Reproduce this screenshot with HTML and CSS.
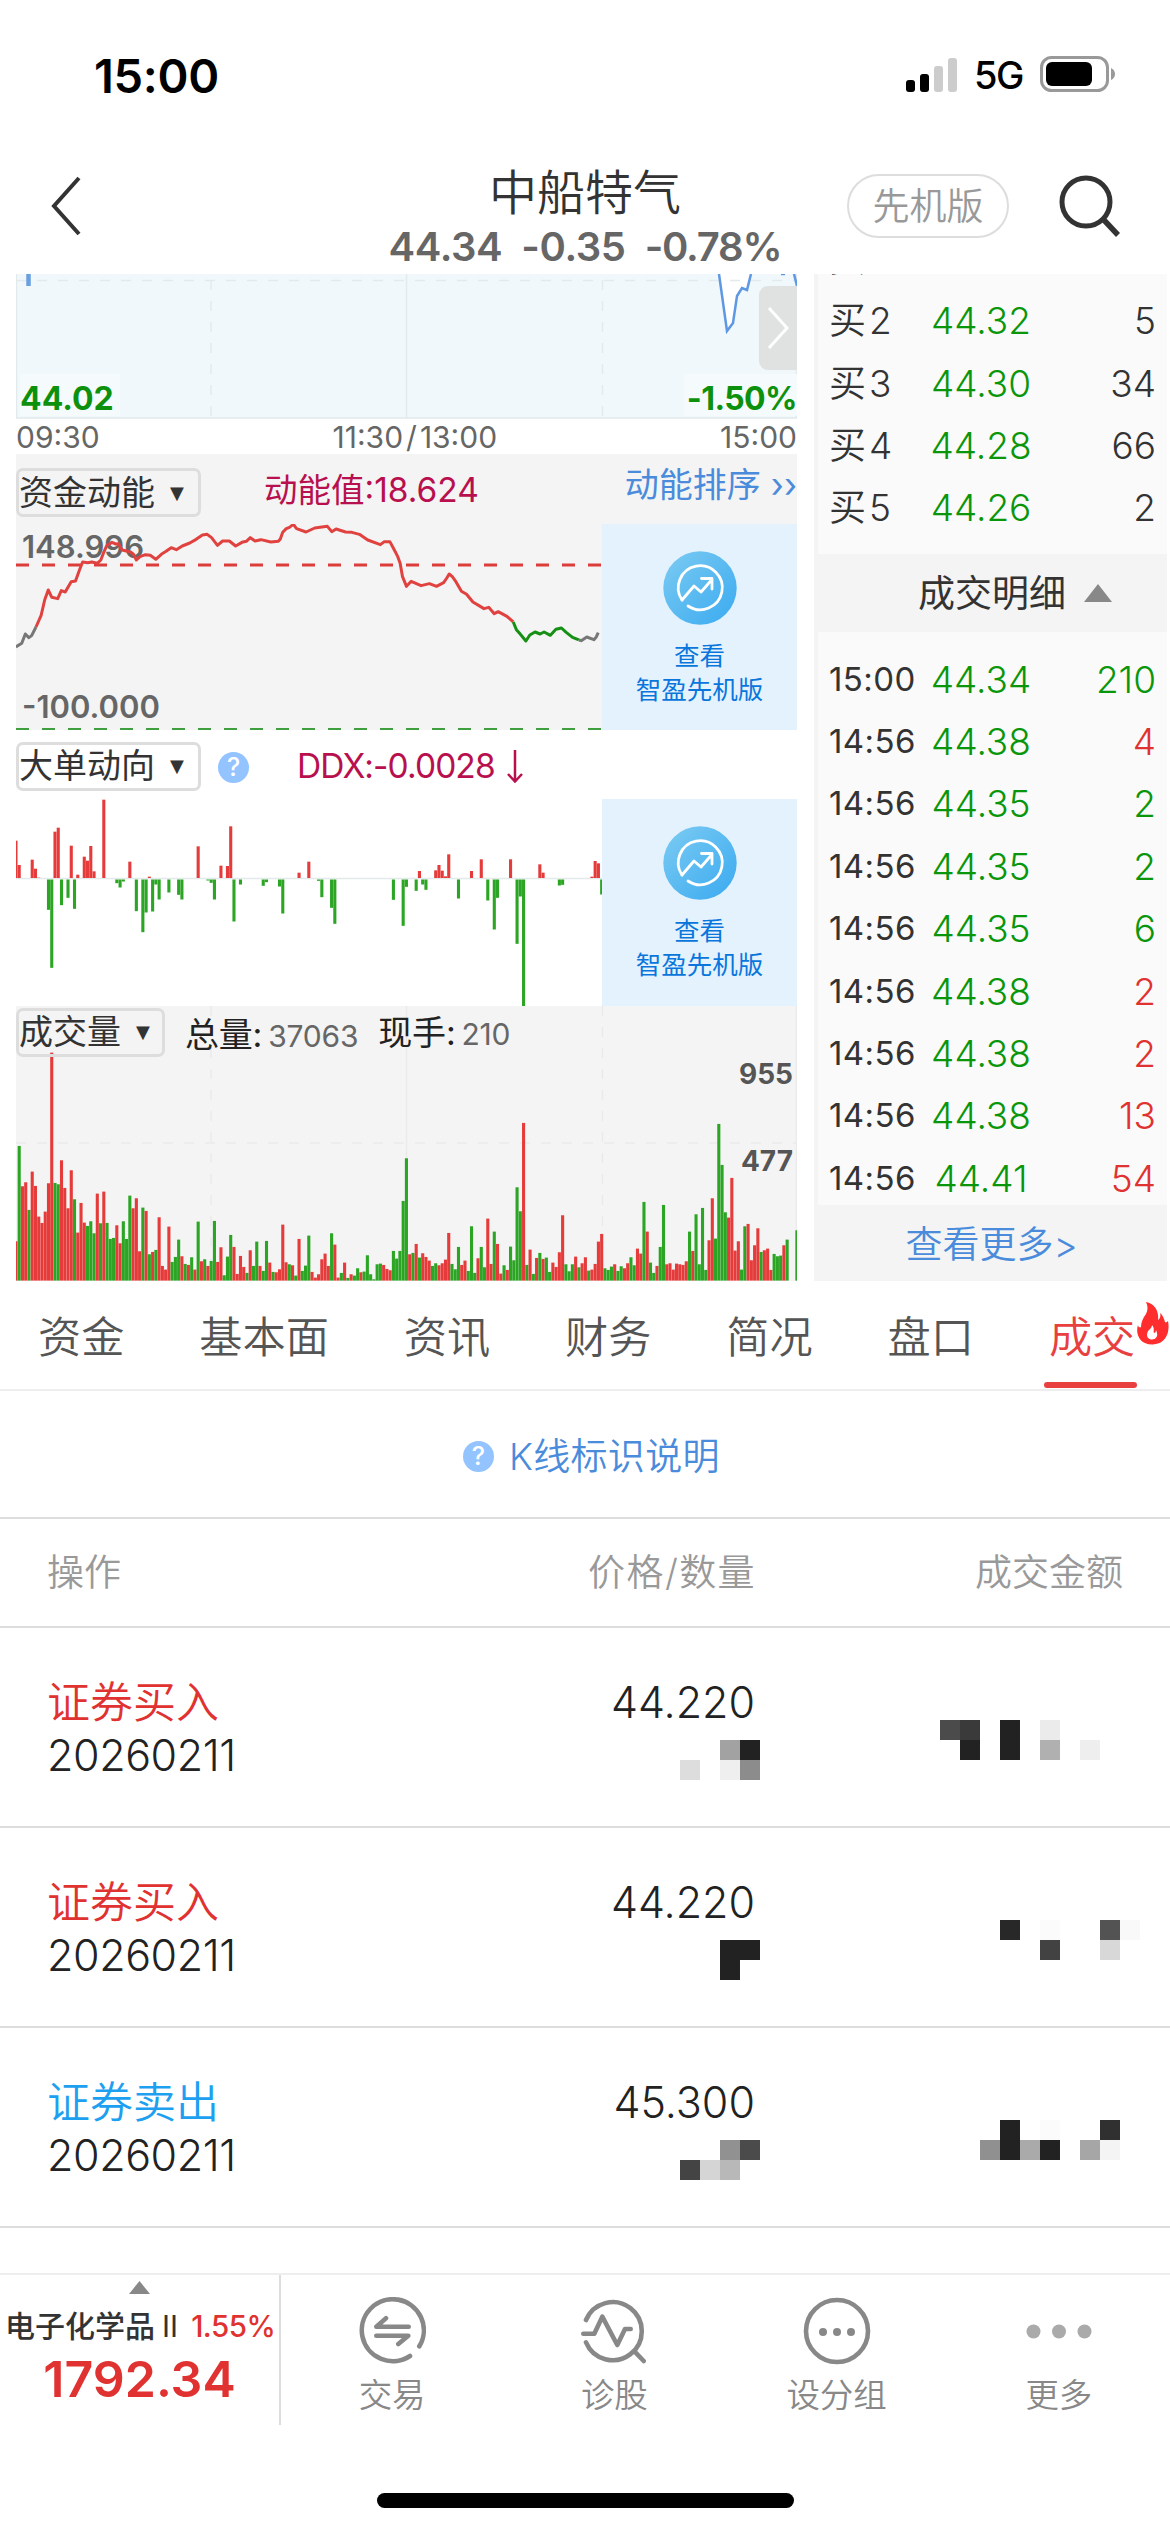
FILE: index.html
```html
<!DOCTYPE html>
<html lang="zh-CN">
<head>
<meta charset="utf-8">
<title>中船特气</title>
<link rel="stylesheet" href="styles.css">
</head>
<body>
<svg class="defs" width="0" height="0">
  <defs>
    <linearGradient id="blue" x1="0" y1="0" x2="1" y2="1"><stop offset="0" stop-color="#7ccbf2"/><stop offset="1" stop-color="#3aaaf0"/></linearGradient>
    <symbol id="trend" viewBox="0 0 74 74">
      <circle cx="37" cy="37" r="36.7" fill="url(#blue)"/>
      <path d="M19 49 A22 22 0 1 1 25 55" fill="none" stroke="#fff" stroke-width="2.8" stroke-linecap="round"/>
      <path d="M19 49 L31 35 L38 41 L48.500 29 M38.500 27.500 H49 V38" fill="none" stroke="#fff" stroke-width="2.800" stroke-linecap="round" stroke-linejoin="round"/>
    </symbol>
  </defs>
</svg>

<header class="status">
  <span class="clock">15:00</span>
  <div class="status-right">
    <svg class="signal" viewBox="0 0 52 34"><rect x="0" y="22" width="9" height="12" rx="3"/><rect x="14" y="16" width="9" height="18" rx="3"/><rect x="28" y="8" width="9" height="26" rx="3" fill="#ccc"/><rect x="42" y="0" width="9" height="34" rx="3" fill="#ccc"/></svg>
    <span class="net">5G</span>
    <svg class="battery" viewBox="0 0 76 38"><rect x="1.500" y="1.500" width="66" height="33" rx="10" fill="none" stroke="#999" stroke-width="3"/><rect x="6" y="6" width="46" height="24" rx="6"/><path d="M71 12 Q75 14 75 18 Q75 22 71 24Z" fill="#999"/></svg>
  </div>
</header>

<nav class="titlebar">
  <svg class="back" viewBox="0 0 34 64"><path d="M30 4 L5 32 L30 60" fill="none" stroke="#333" stroke-width="4"/></svg>
  <div class="heading">
    <h1>中船特气</h1>
    <p class="quote"><span>44.34</span><span>-0.35</span><span class="change">-0.78%</span></p>
  </div>
  <span class="pill">先机版</span>
  <svg class="search" viewBox="0 0 64 64"><circle cx="28" cy="28" r="24" fill="none" stroke="#333" stroke-width="5"/><path d="M45 45 L60 61" stroke="#333" stroke-width="5.500"/></svg>
</nav>

<main class="market">
  <section class="charts">
    <div class="price-chart">
      <svg viewBox="0 0 781 145">
        <rect width="781" height="145" fill="#f0f8fc"/>
        <path d="M703 0 L711 58 L717 49 L721 22 L726 14 L731 16 L735 0Z" fill="#fff"/>
        <path d="M0 6.500 H781" class="grid dashed"/><path d="M195 6 V144" class="grid dashed"/><path d="M586.500 6 V144" class="grid dashed"/>
        <path d="M390.500 0 V144 M0 144 H781 M.5 0 V144 M780.500 0 V144" class="grid"/>
        <path d="M12.500 0 V12" stroke="#6a9fe0" stroke-width="4.500"/>
        <path d="M703 0 L711 57 L717 49 L721 22 L726 14 L731 16 L735 0 M778 0 L781 12 M765 0 H769" fill="none" stroke="#5f98e2" stroke-width="2.500"/>
      </svg>
      <b class="label low">44.02</b>
      <b class="label low-pct">-1.50%</b>
      <span class="expand"><svg viewBox="0 0 38 84"><path d="M10 22 L28 42 L10 62" fill="none" stroke="#fff" stroke-width="3"/></svg></span>
    </div>
    <div class="axis"><span>09:30</span><span class="noon">11:30<i>/</i>13:00</span><span>15:00</span></div>

    <div class="panel-head momentum-head">
      <span class="select">资金动能<i>▼</i></span>
      <span class="reading">动能值:18.624</span>
      <a class="rank">动能排序<i>››</i></a>
    </div>
    <div class="panel-body momentum">
      <div class="plot">
        <b class="label max">148.996</b><b class="label min">-100.000</b>
        <svg viewBox="0 0 586 206">
          <path d="M0 41 H586" stroke="#dc3c3a" stroke-width="3" stroke-dasharray="13 13"/>
          <path d="M0 205 H586" stroke="#3f9f3f" stroke-width="2" stroke-dasharray="13 13"/>
          <g transform="translate(-16 -24) scale(.3954 .3333)" class="trace">
            <path stroke="#777" d="M40 441 L55 430 L64 402 L73 413 L80 407 L91 381"/>
            <path stroke="#e04240" d="M91 381 L104 346 L113 300 L122 270 L131 292 L146 296 L155 272 L165 276 L180 245 L191 243 L201 210 L209 186 L222 188 L232 186 L246 190 L255 180 L262 158 L270 137 L276 133 L283 127 L293 132 L300 131 L309 150 L330 156 L337 162 L345 180 L354 170 L368 164 L380 166 L394 178 L408 163 L420 154 L433 143 L446 149 L461 138 L480 129 L496 118 L512 105 L524 103 L535 113 L550 136 L563 123 L580 123 L596 138 L612 127 L623 124 L633 113 L645 123 L660 119 L685 126 L704 124 L709 117 L715 97 L724 86 L732 82 L742 73 L750 86 L774 96 L796 84 L828 79 L839 95 L850 87 L874 96 L890 97 L909 103 L930 120 L962 134 L972 125 L986 125 L995 145 L1006 170 L1012 190 L1018 230 L1028 259 L1040 244 L1065 257 L1086 251 L1104 259 L1122 248 L1130 234 L1136 222 L1144 230 L1153 245 L1167 274 L1180 283 L1196 306 L1224 326 L1236 322 L1250 341 L1260 335 L1282 349 L1298 366"/>
            <path stroke="#159015" d="M1298 366 L1306 389 L1314 400 L1330 423 L1340 405 L1353 396 L1366 402 L1376 396 L1392 406 L1406 388 L1420 384 L1432 397 L1448 412 L1464 420"/>
            <path stroke="#777" d="M1464 420 L1470 422 L1484 411 L1502 419 L1508 411 L1513 398"/>
          </g>
        </svg>
      </div>
      <a class="promo"><svg><use href="#trend"/></svg><span>查看</span><span>智盈先机版</span></a>
    </div>

    <div class="panel-head ddx-head">
      <span class="select">大单动向<i>▼</i></span>
      <span class="help">?</span>
      <span class="reading ddx-reading">DDX:-0.0028</span>
      <svg class="down" viewBox="0 0 16 34"><path d="M8 1 V32 M1 25 L8 32.500 L15 25" fill="none" stroke="#b8104e" stroke-width="2.500"/></svg>
    </div>
    <div class="panel-body ddx">
      <div class="plot"><svg viewBox="0 0 586 207"><path d="M0 79.500 H586" class="grid"/><g id="ddx"></g></svg></div>
      <a class="promo"><svg><use href="#trend"/></svg><span>查看</span><span>智盈先机版</span></a>
    </div>

    <div class="volume">
      <svg viewBox="0 0 781 275">
        <path d="M195 0 V275 M586.500 0 V275" class="grid soft dashed"/><path d="M0 137 H781" class="grid soft dashed"/><path d="M390.500 0 V275 M780.500 0 V275" class="grid soft"/>
        <g id="vol"></g>
      </svg>
      <div class="volume-head">
        <span class="select short">成交量<i>▼</i></span>
        <span class="stat total">总量:<em>37063</em></span>
        <span class="stat">现手:<em>210</em></span>
      </div>
      <b class="label vmax">955</b><b class="label vmid">477</b>
    </div>
  </section>

  <aside class="book">
    <div class="bids">
      <div class="bid"><span>买<i>1</i></span><span class="price">44.33</span><span class="qty">1</span></div>
      <div class="bid"><span>买<i>2</i></span><span class="price">44.32</span><span class="qty">5</span></div>
      <div class="bid"><span>买<i>3</i></span><span class="price">44.30</span><span class="qty">34</span></div>
      <div class="bid"><span>买<i>4</i></span><span class="price">44.28</span><span class="qty">66</span></div>
      <div class="bid"><span>买<i>5</i></span><span class="price">44.26</span><span class="qty">2</span></div>
    </div>
    <div class="ticks-head">成交明细<svg viewBox="0 0 28 18"><path d="M14 0 L28 18 H0Z" fill="#888"/></svg></div>
    <div class="ticks">
      <div class="tick"><span>15:00</span><span class="price">44.34</span><span class="qty sell">210</span></div>
      <div class="tick"><span>14:56</span><span class="price">44.38</span><span class="qty buy">4</span></div>
      <div class="tick"><span>14:56</span><span class="price">44.35</span><span class="qty sell">2</span></div>
      <div class="tick"><span>14:56</span><span class="price">44.35</span><span class="qty sell">2</span></div>
      <div class="tick"><span>14:56</span><span class="price">44.35</span><span class="qty sell">6</span></div>
      <div class="tick"><span>14:56</span><span class="price">44.38</span><span class="qty buy">2</span></div>
      <div class="tick"><span>14:56</span><span class="price">44.38</span><span class="qty buy">2</span></div>
      <div class="tick"><span>14:56</span><span class="price">44.38</span><span class="qty buy">13</span></div>
      <div class="tick"><span>14:56</span><span class="price">44.41</span><span class="qty buy">54</span></div>
    </div>
    <a class="more">查看更多&gt;</a>
  </aside>
</main>

<nav class="tabs">
  <a>资金</a><a>基本面</a><a>资讯</a><a>财务</a><a>简况</a><a>盘口</a>
  <a class="active">成交<svg class="fire" viewBox="0 0 32 43"><path fill="#ff2d2d" fill-rule="evenodd" d="M9 0 C18 2 22 9 21 18 C23 17 24 14 23 11 C26 13 27 17 28 20 C29 21 30 20 31 19 C33 29 30 42 16 42.500 C3 43 -2 32 1 23 C1 25 3 26 4 25 C4 20 6 16 9 12 C11 8 11 4 9 0Z M15 23 C18 26 16 30 17 31 C18 31 19 30 19 28 C21 32 21 37 15 37.500 C9 37 9 31 12 28 C14 26 15 25 15 23Z"/></svg></a>
</nav>

<div class="explain"><span class="help">?</span>K线标识说明</div>

<section class="trades">
  <div class="thead"><span>操作</span><span>价格/数量</span><span>成交金额</span></div>
  <div class="trade">
    <div class="op"><span class="buy">证券买入</span><span class="date">20260211</span></div>
    <div class="deal"><span>44.220</span>
      <svg viewBox="0 0 4 2"><path fill="#a2a2a2" d="M2 0h1v1h-1z"/><path fill="#222" d="M3 0h1v1h-1z"/><path fill="#ddd" d="M0 1h1v1h-1z"/><path fill="#efefef" d="M2 1h1v1h-1z"/><path fill="#8c8c8c" d="M3 1h1v1h-1z"/></svg></div>
    <svg class="amount" viewBox="0 0 10 2"><path fill="#4b4b4b" d="M0 0h1v1h-1z"/><path fill="#3a3a3a" d="M1 0h1v1h-1z"/><path fill="#222" d="M1 1h1v1h-1zM3 0h1v2h-1z"/><path fill="#ebebeb" d="M5 0h1v1h-1z"/><path fill="#b0b0b0" d="M5 1h1v1h-1z"/><path fill="#eee" d="M7 1h1v1h-1z"/></svg>
  </div>
  <div class="trade">
    <div class="op"><span class="buy">证券买入</span><span class="date">20260211</span></div>
    <div class="deal"><span>44.220</span>
      <svg viewBox="0 0 4 2"><path fill="#222" d="M2 0h2v1h-1v1h-1z"/></svg></div>
    <svg class="amount" viewBox="0 0 10 2"><path fill="#282828" d="M3 0h1v1h-1z"/><path fill="#fbfbfb" d="M5 0h1v1h-1z"/><path fill="#424242" d="M5 1h1v1h-1z"/><path fill="#535353" d="M8 0h1v1h-1z"/><path fill="#f9f9f9" d="M9 0h1v1h-1z"/><path fill="#d8d8d8" d="M8 1h1v1h-1z"/></svg>
  </div>
  <div class="trade">
    <div class="op"><span class="sold">证券卖出</span><span class="date">20260211</span></div>
    <div class="deal"><span>45.300</span>
      <svg viewBox="0 0 4 2"><path fill="#919191" d="M2 0h1v1h-1z"/><path fill="#4b4b4b" d="M3 0h1v1h-1z"/><path fill="#444" d="M0 1h1v1h-1z"/><path fill="#d5d5d5" d="M1 1h1v1h-1z"/><path fill="#b8b8b8" d="M2 1h1v1h-1z"/></svg></div>
    <svg class="amount" viewBox="0 0 10 2"><path fill="#222" d="M3 0h1v2h-1zM5 1h1v1h-1z"/><path fill="#fbfbfb" d="M5 0h1v1h-1z"/><path fill="#303030" d="M8 0h1v1h-1z"/><path fill="#909090" d="M2 1h1v1h-1z"/><path fill="#aaa" d="M4 1h1v1h-1z"/><path fill="#a6a6a6" d="M7 1h1v1h-1z"/><path fill="#f4f4f4" d="M8 1h1v1h-1z"/></svg>
  </div>
</section>

<footer class="bottom">
  <div class="sector">
    <svg viewBox="0 0 21 13"><path d="M10.500 0 L21 13 H0Z" fill="#888"/></svg>
    <p class="sector-name"><span>电子化学品</span><span class="two">II</span><span class="pct">1.55%</span></p>
    <p class="index">1792.34</p>
  </div>
  <a class="action"><svg viewBox="0 0 68 68"><path d="M61.300 49.300 A31 31 0 1 0 52 59 M50.700 29.700 H18.300 L28 21.300 M18.300 38.700 H50.300 L40.300 47"/></svg>交易</a>
  <a class="action"><svg viewBox="0 0 68 68"><path d="M6 23 A29 29 0 1 1 6 45.300 M3.300 36.700 H14.300 L22.300 19.700 L37.300 48 L45 32 H50.700 M54.700 54.700 L63.700 64"/></svg>诊股</a>
  <a class="action"><svg viewBox="0 0 68 68"><circle cx="34" cy="34" r="31"/><g class="dots"><circle cx="20" cy="35" r="4"/><circle cx="34" cy="35" r="4"/><circle cx="48" cy="35" r="4"/></g></svg>设分组</a>
  <a class="action"><svg viewBox="0 0 68 68"><g class="dots pale"><circle cx="8.500" cy="34.500" r="7"/><circle cx="34" cy="34.500" r="7"/><circle cx="59.500" cy="34.500" r="7"/></g></svg>更多</a>
</footer>
<div class="home"></div>
<script src="charts.js"></script>
</body>
</html>
```

FILE: styles.css
```css
* { box-sizing: border-box; }
body {
  margin: 0;
  width: 1170px;
  height: 2532px;
  overflow: hidden;
  background: #fff;
  color: #333;
  font-family: Inter, "Noto Sans CJK SC", sans-serif;
  font-size: 37px;
  line-height: 1;
  display: flex;
  flex-direction: column;
}
body > * { flex: none; }
h1, p { margin: 0; font-weight: 400; }
i, em { font-style: normal; }
svg { display: block; flex: none; }
.defs { position: absolute; }
span, a, b { white-space: nowrap; }

.status { height: 150px; padding: 0 54px 0 94px; display: flex; justify-content: space-between; align-items: center; color: #000; }
.clock { font-size: 47px; font-weight: 600; letter-spacing: -.3px; }
.status-right { display: flex; align-items: center; }
.signal { width: 52px; height: 34px; margin-right: 16px; }
.net { font-size: 38px; font-weight: 500; width: 50px; margin-right: 16px; letter-spacing: -1.5px; }
.battery { width: 76px; height: 38px; }

.titlebar { height: 124px; position: relative; display: flex; align-items: flex-start; padding-left: 49px; }
.back { width: 34px; height: 64px; margin-top: 24px; }
.heading { width: 420px; margin-left: 292px; text-align: center; }
.heading h1 { font-size: 48px; line-height: 60px; margin-top: 13px; font-weight: 350; }
.quote { display: flex; justify-content: center; gap: 19px; font-size: 40px; font-weight: 600; color: #666; line-height: 50px; letter-spacing: -.4px; margin-top: -1px; }
.change { letter-spacing: -1.2px; }
.pill { margin: 24px 0 0 52px; width: 162px; height: 64px; border: 2px solid #ddd; border-radius: 32px; color: #999; text-align: center; line-height: 62px; font-weight: 350; }
.search { width: 64px; height: 64px; margin: 24px 0 0 49px; }

.market { height: 1007px; padding-left: 16px; display: flex; }
.charts { width: 781px; display: flex; flex-direction: column; }
.grid { fill: none; stroke: #e2eaec; stroke-width: 1.5; }
.grid.soft { stroke: #eaeaea; }
.dashed { stroke-dasharray: 10 11; }
.label { position: absolute; font-weight: 700; line-height: 1; }
.price-chart { height: 145px; position: relative; }
.price-chart > svg { width: 781px; height: 145px; }
.low, .low-pct { font-size: 32px; color: #0d910d; background: #f5fbfd; height: 42px; line-height: 50px; top: 100px; }
.low { left: 4px; width: 100px; }
.low-pct { right: 0; width: 113px; text-align: right; letter-spacing: -.6px; }
.expand { position: absolute; right: 0; top: 12px; width: 38px; height: 84px; border-radius: 9px 0 0 9px; background: #e0e2e1; }
.axis { height: 35px; display: flex; justify-content: space-between; font-size: 30px; line-height: 36px; color: #666; }
.axis i { margin: 0 3px; }
.noon { margin-left: 10px; }

.panel-head { display: flex; position: relative; }
.momentum-head { height: 70px; background: #f4f4f4; padding-top: 14px; }
.ddx-head { height: 69px; padding-top: 12px; }
.select { width: 185px; height: 49px; border: 3px solid #ddd; border-radius: 7px; line-height: 40px; font-size: 34px; display: flex; align-items: center; }
.select i { font-family: "DejaVu Sans"; font-size: 18px; margin-left: 15px; }
.select.short { width: 149px; }
.reading { color: #b8104e; font-size: 33.500px; line-height: 45px; margin-left: 63px; }
.rank { margin-left: auto; color: #4a8bdb; font-size: 34px; line-height: 34px; }
.rank i { margin-left: 10px; }
.help { width: 31px; height: 31px; border-radius: 50%; background: #94c4ff; color: #fff; text-align: center; font-size: 25px; line-height: 31px; font-weight: 500; flex: none; }
.ddx-head .help { margin: 10px 0 0 17px; }
.ddx-reading { margin-left: 48px; line-height: 48px; letter-spacing: -.9px; }
.down { width: 16px; height: 34px; margin: 7px 0 0 12px; }
.panel-body { display: flex; }
.momentum { height: 206px; background: #f4f4f4; }
.ddx { height: 207px; }
.plot { width: 586px; position: relative; }
.plot svg { width: 586px; height: 100%; position: relative; overflow: hidden; }
.trace path { fill: none; stroke-width: 3px; vector-effect: non-scaling-stroke; stroke-linejoin: round; }
.max, .min { color: #666; font-size: 31px; font-weight: 600; left: 6px; }
.max { top: 7px; }
.min { top: 167px; }
.promo { width: 195px; background: #e4f2fe; color: #0a76dc; display: flex; flex-direction: column; align-items: center; font-size: 25.5px; line-height: 34px; }
.promo svg { width: 74px; height: 74px; margin: 27px 0 14px; }

.volume { height: 276px; background: #f4f4f4; position: relative; }
.volume > svg { width: 781px; height: 275px; }
.volume-head { position: absolute; left: 0; top: 2px; display: flex; }
.stat { font-size: 34px; line-height: 50px; color: #222; letter-spacing: -.2px; }
.stat em { color: #666; font-size: 30px; margin-left: 6px; }
.total { margin: 2px 20px 0 20px; }
.vmax, .vmid { color: #555; font-size: 28px; right: 4px; }
.vmax { top: 54px; }
.vmid { top: 141px; }

.book { width: 353px; margin-left: 17px; background: #f4f4f4; padding-left: 4px; }
.bids { height: 280px; background: #fafafa; overflow: hidden; display: flex; flex-direction: column; justify-content: flex-end; padding-bottom: 15px; }
.bid, .tick { flex: none; height: 62.4px; display: grid; grid-template-columns: 92px 120px 1fr; align-items: center; padding: 0 11px 0 11px; }
.bid i { margin-left: 3px; }
.price { color: #0a960a; text-align: center; width: 120px; }
.qty { text-align: right; }
.bid > span, .price, .qty { font-weight: 350; }
.tick > span:first-child { font-size: 33px; letter-spacing: .4px; }
.ticks-head { height: 78px; padding-left: 100px; display: flex; align-items: center; }
.ticks-head svg { width: 28px; height: 18px; margin-left: 18px; }
.ticks { height: 573px; background: #fafafa; padding-top: 16px; }
.sell { color: #0a960a; }
.buy { color: #e03230; }
.more { display: block; color: #4a8bdb; text-align: center; line-height: 80px; height: 76px; font-weight: 350; padding-right: 2px; }

.tabs { height: 110px; border-bottom: 2px solid #eee; padding: 0 0 0 38px; display: flex; gap: 74.900px; font-size: 43.200px; color: #555; line-height: 112px; }
.tabs a { position: relative; font-weight: 350; }
.tabs .active { color: #e8403f; }
.active::after { content: ""; position: absolute; left: -5px; right: -2px; bottom: 1px; height: 6px; border-radius: 3px; background: #e8403f; }
.fire { position: absolute; left: 88px; top: 21px; width: 32px; height: 43px; }

.explain { height: 128px; border-bottom: 2px solid #ddd; display: flex; align-items: center; color: #4a8bdb; padding: 5px 0 0 463px; font-weight: 350; letter-spacing: .3px; }
.explain .help { margin-right: 15px; }
.thead { height: 109px; border-bottom: 2px solid #ddd; display: grid; grid-template-columns: 400px 1fr 1fr; padding: 0 47px; line-height: 108px; color: #999; font-weight: 350; }
.thead span:nth-child(2) { text-align: right; width: 309px; letter-spacing: 1.400px; }
.thead span:nth-child(3) { text-align: right; }
.trade { height: 200px; border-bottom: 2px solid #ddd; padding-left: 47px; display: flex; color: #222; font-size: 43px; font-weight: 350; }
.op { width: 553px; padding-top: 48px; display: flex; flex-direction: column; line-height: 53px; }
.date { letter-spacing: -.400px; }
.op .sold { color: #1ea0f0; }
.deal { width: 160px; padding-top: 48px; line-height: 53px; display: flex; flex-direction: column; align-items: flex-end; }
.deal span { margin-right: 5px; }
.deal svg { width: 80px; height: 40px; margin-top: 11px; }
.amount { width: 200px; height: 40px; margin: 92px 0 0 180px; }
.deal svg, .amount { shape-rendering: crispEdges; }

.bottom { height: 152px; margin-top: 45px; border-top: 2px solid #eee; display: flex; }
.sector { width: 281px; border-right: 2px solid #ddd; text-align: center; }
.sector svg { width: 21px; height: 13px; margin: 6px auto 0; }
.sector-name { font-size: 30px; font-weight: 500; height: 64px; line-height: 64px; display: flex; padding-left: 5px; }
.two { margin-left: 7px; font-weight: 400; }
.pct { margin-left: 13px; color: #e03230; font-size: 29.500px; letter-spacing: -.5px; }
.index { font-size: 50px; font-weight: 600; color: #e03230; line-height: 42px; }
.action { flex: 1; display: flex; flex-direction: column; align-items: center; color: #888; font-size: 33.500px; font-weight: 350; }
.action svg { width: 68px; height: 68px; margin: 22px 0 14px; fill: none; stroke: #888; stroke-width: 4.600; stroke-linecap: round; stroke-linejoin: round; }
.action .dots { fill: #888; stroke: none; }
.action .pale { fill: #aaa; }
.home { width: 417px; height: 15px; border-radius: 8px; background: #000; margin: 68px 0 0 377px; }
```

FILE: charts.js
```js
// One bar per trading minute: r = rise, g = fall, "-" = no trades; the number is the bar height.
const volume = `r118 g404 r283 r295 g212 r327 r284 r192 r173 r207 r292 r684 g293 g289 r361 r278 r217 r331 g244 r144
r233 r174 g164 g178 g142 r261 g172 r267 g173 g125 g128 r166 r112 g178 g125 g255 r217 r247 r88 g219
r209 g79 r86 g92 r190 r44 r33 r162 g56 g71 g123 r73 g50 r47 g70 r33 g177 r58 g64 r44
g59 g179 r56 r100 g16 g72 g137 r101 r20 r74 r41 g23 r91 g44 g117 r44 g29 g119 r54 g26
r25 r34 r168 r55 g49 r46 g15 r125 g29 g45 g135 r26 r9 r19 r64 r81 r44 g142 r108 r9
g23 r54 g8 r19 g15 g37 r25 g27 g76 g19 g4 g49 g51 r47 r35 r31 g89 g66 g89 g239
g367 r79 g83 r110 g69 r82 r71 r60 g44 g52 r46 r52 r63 r143 g50 g34 g101 r47 r60 g29
g163 g23 r67 g101 g40 r186 r50 g147 r110 r21 g46 r32 g102 g61 g280 g208 r473 g47 r93 g20
r68 g83 r65 g69 g26 r54 r41 r85 r196 g49 g28 g49 r72 g40 r52 r70 g30 r33 r50 r117
r140 g37 g32 g42 r49 g29 g43 r37 r52 g70 g46 r96 r81 g236 r147 g54 g23 r44 g101 g227
r49 r52 r33 r51 r49 r47 r58 g147 r89 g199 g49 g218 g32 r121 r247 g126 g470 g347 g205 r189
r308 r90 r118 g33 g163 r170 r61 r106 r157 g86 r91 r96 r32 g80 g73 g75 r106 g123 - - g151`.split(/\s+/);

// Net large orders as [minute, height]; positive bars rise from the zero line.
const orders = [[0,112],[1,39],[5,55],[6,28],[7,1],[10,-91],[11,-265],[12,139],[13,151],[14,-77],[16,-55],[17,97],[18,-88],[19,10],[21,64],[22,52],[23,96],[24,20],[27,235],[31,-11],[32,-24],[33,-6],[35,49],[37,-95],[39,-158],[40,-99],[41,4],[42,-96],[43,-15],[44,-60],[47,-39],[50,-46],[51,-60],[56,95],[59,-3],[60,-10],[61,-60],[63,37],[65,36],[66,155],[67,-126],[69,-15],[76,-19],[77,-8],[81,-21],[82,-102],[87,16],[90,49],[93,-4],[94,-53],[97,-85],[98,-133],[116,-61],[119,-139],[120,-22],[123,-34],[124,21],[125,-15],[126,-31],[129,23],[130,39],[131,22],[132,5],[133,71],[136,-57],[140,21],[143,56],[145,-63],[147,-150],[148,-55],[152,56],[154,-193],[155,-51],[156,-385],[161,41],[162,16],[167,-18],[168,-16],[177,4],[178,51],[179,44],[180,-45]];

const STEP = 3.254;
const bar = (i, y, h, up) =>
  `<rect x="${(i * STEP - 1.6).toFixed(2)}" y="${y.toFixed(2)}" width="3.1" height="${h.toFixed(2)}" fill="${up ? '#e53c3b' : '#2ca525'}"/>`;

document.getElementById('vol').innerHTML = volume.map((v, i) => {
  if (v === '-') return '';
  const h = v.slice(1) / 3;
  return bar(i, 274.600 - h, h, v[0] === 'r');
}).join('');

document.getElementById('ddx').innerHTML = orders.map(([i, v]) => {
  const h = Math.abs(v) / 3;
  return v > 0 ? bar(i, 79 - h, h, true) : bar(i, 80.500, h, false);
}).join('');
```
